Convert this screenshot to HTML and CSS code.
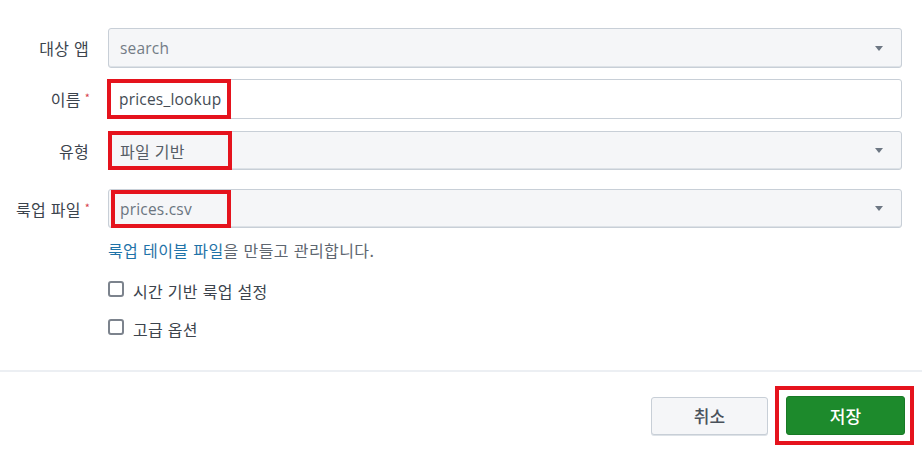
FILE: index.html
```html
<!DOCTYPE html>
<html lang="ko">
<head>
<meta charset="utf-8">
<title>룩업 테이블 파일</title>
<link rel="stylesheet" href="styles.css">
</head>
<body>
<div class="dialog">
  <form class="form">
    <div class="row r1">
      <label class="label">대상 앱</label>
      <div class="field">
        <div class="control select disabled"><span class="value muted">search</span><span class="caret"></span></div>
      </div>
    </div>
    <div class="row r2">
      <label class="label">이름<span class="req">*</span></label>
      <div class="field">
        <div class="control text"><span class="value">prices_lookup</span></div>
        <div class="mark m1"></div>
      </div>
    </div>
    <div class="row r3">
      <label class="label">유형</label>
      <div class="field">
        <div class="control select"><span class="value ko">파일 기반</span><span class="caret"></span></div>
        <div class="mark m2"></div>
      </div>
    </div>
    <div class="row r4">
      <label class="label">룩업 파일<span class="req">*</span></label>
      <div class="field">
        <div class="control select"><span class="value muted">prices.csv</span><span class="caret"></span></div>
        <div class="mark m3"></div>
      </div>
    </div>
    <p class="help"><a class="link">룩업 테이블 파일</a>을 만들고 관리합니다.</p>
    <div class="checks">
      <label class="check"><span class="box"></span>시간 기반 룩업 설정</label>
      <label class="check"><span class="box"></span>고급 옵션</label>
    </div>
  </form>
  <div class="footer">
    <button type="button" class="btn cancel">취소</button>
    <div class="save-wrap">
      <button type="button" class="btn save">저장</button>
      <div class="mark m4"></div>
    </div>
  </div>
</div>
</body>
</html>
```

FILE: styles.css
```css
* { box-sizing: border-box; }
html, body { margin: 0; padding: 0; background: #fff; }
body {
  font-family: "Open Sans", "Noto Sans CJK KR", sans-serif;
  color: #3c444d;
  width: 922px;
  height: 454px;
  overflow: hidden;
}
.dialog { width: 922px; }
.form { padding: 28px 20px 0 0; margin: 0; }
.row { display: flex; align-items: center; }
.r2 { margin-top: 11px; }
.r3 { margin-top: 12px; }
.r4 { margin-top: 19px; }
.label {
  width: 89px;
  margin-right: 19px;
  text-align: right;
  font-family: "Noto Sans CJK KR", sans-serif;
  font-size: 16px;
  letter-spacing: 0.3px;
  color: #3c444d;
  position: relative;
  white-space: nowrap;
}
.req {
  color: #d6404a;
  font-size: 11px;
  position: relative;
  top: -4px;
  margin-left: 4px;
  margin-right: -1px;
  letter-spacing: 0;
}
.field { flex: 1; position: relative; }
.control {
  height: 40px;
  border: 1px solid #c8cfd7;
  border-radius: 3px;
  background: #f5f6f8;
  display: flex;
  align-items: center;
  padding: 0 12px 0 11px;
  box-shadow: inset 0 -1px 0 #dde2e7;
}
.control.text { background: #fff; box-shadow: none; padding-left: 10px; }
.r3 .control, .r4 .control { height: 39px; }
.value { flex: 1; font-size: 15.5px; letter-spacing: 0.2px; color: #444c55; }
.value.muted { color: #6b7580; }
.value.ko { font-family: "Noto Sans CJK KR", sans-serif; color: #555d66; font-size: 16px; letter-spacing: 0.3px; }
.disabled .value { color: #737c86; }
.caret {
  width: 0; height: 0;
  border-left: 4px solid transparent;
  border-right: 4px solid transparent;
  border-top: 5px solid #6d7783;
  margin-right: 6px;
}
.mark {
  position: absolute;
  border: 4px solid #e5131d;
  pointer-events: none;
}
.m1 { left: -1px; top: 0; width: 124px; height: 40px; }
.m2 { left: 0; top: 0; width: 124px; height: 39px; }
.m3 { left: 3px; top: 1px; width: 120px; height: 38px; }
.help {
  margin: 12px 0 0 108px;
  font-family: "Noto Sans CJK KR", sans-serif;
  font-size: 16px;
  letter-spacing: 0.4px;
  color: #5e6670;
  line-height: 20px;
}
.link { color: #1f73a8; }
.checks { margin: 21px 0 0 108px; display: flex; flex-direction: column; gap: 18px; }
.check {
  display: flex;
  align-items: center;
  font-family: "Noto Sans CJK KR", sans-serif;
  font-size: 16px;
  letter-spacing: 0.3px;
  color: #3c444d;
  line-height: 20px;
}
.box {
  width: 16px; height: 16px;
  border: 2px solid #7c838d;
  border-radius: 3px;
  margin-right: 9px;
  position: relative;
  top: -2px;
}
.footer {
  margin-top: 31px;
  border-top: 2px solid #eceff3;
  display: flex;
  justify-content: flex-end;
  align-items: center;
  padding: 24px 17px 0 0;
  gap: 18px;
}
.btn {
  height: 38px;
  border-radius: 3px;
  font-family: "Noto Sans CJK KR", sans-serif;
  font-size: 17px;
  font-weight: 500;
  cursor: pointer;
}
.cancel {
  width: 117px;
  background: #f5f6f8;
  border: 1px solid #c8cfd7;
  color: #4a525b;
  box-shadow: 0 1px 0 #dde2e7;
}
.save-wrap { position: relative; }
.save {
  display: block;
  width: 119px;
  height: 39px;
  background: #1d8a2c;
  border: 1px solid #187a25;
  color: #fff;
}
.m4 { left: -11px; top: -10px; width: 139px; height: 59px; }
```
